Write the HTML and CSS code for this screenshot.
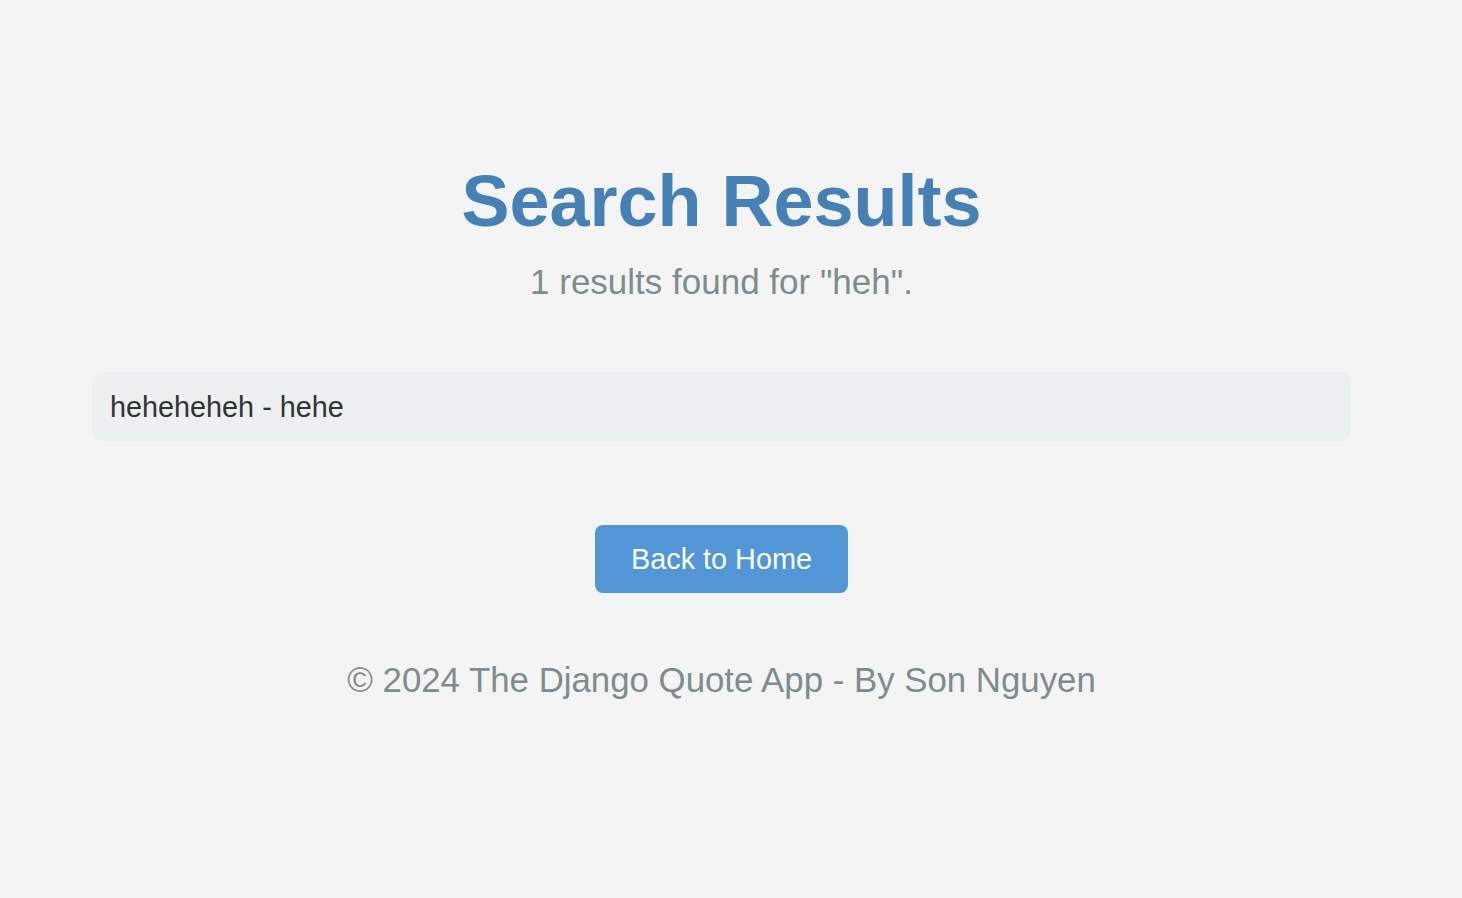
FILE: index.html
```html
<!DOCTYPE html>
<html lang="en">
<head>
<meta charset="utf-8">
<title>Search Results</title>
<link rel="stylesheet" href="styles.css">
</head>
<body>
<main class="page">
  <h1 class="title">Search Results</h1>
  <p class="summary">1 results found for "heh".</p>
  <ul class="results">
    <li class="result">heheheheh - hehe</li>
  </ul>
  <div class="actions">
    <a class="btn" href="#">Back to Home</a>
  </div>
  <footer class="footer">© 2024 The Django Quote App - By Son Nguyen</footer>
</main>
</body>
</html>
```
FILE: styles.css
```css
html, body {
  margin: 0;
  padding: 0;
  background: #f4f4f4;
}
body {
  font-family: "Liberation Sans", Arial, Helvetica, sans-serif;
  line-height: 1.15;
  color: #333;
}
.page {
  width: 1259px;
  margin: 0 0 0 92px;
  padding-top: 160px;
  display: flex;
  flex-direction: column;
  align-items: center;
}
.title {
  margin: 0;
  font-size: 72px;
  font-weight: bold;
  line-height: 1.15;
  color: #4580b6;
}
.summary {
  margin: 19px 0 0;
  font-size: 35px;
  color: #7f8c8d;
}
.results {
  list-style: none;
  margin: 70px 0 0;
  padding: 0;
  width: 100%;
}
.result {
  background: #ecf0f1;
  border-radius: 10px;
  padding: 19px 18px 17px;
  font-size: 28.8px;
  color: #333;
}
.actions {
  margin-top: 84px;
}
.btn {
  display: inline-block;
  background: #5296d6;
  color: #fff;
  text-decoration: none;
  font-size: 28.8px;
  padding: 18px 36px 17px;
  border-radius: 8px;
}
.footer {
  margin-top: 67px;
  font-size: 34.8px;
  color: #7f8c8d;
}
```
